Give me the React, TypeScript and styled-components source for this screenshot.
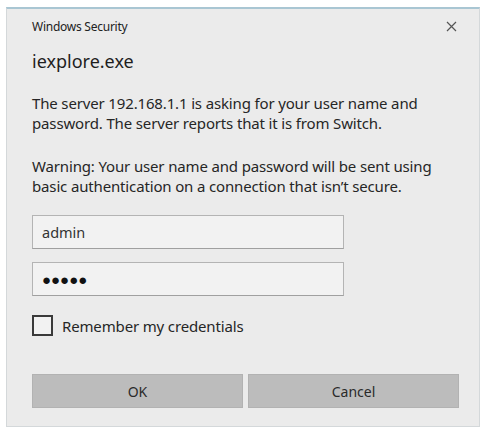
import React from "react";
import styled, { createGlobalStyle } from "styled-components";

const Global = createGlobalStyle`
  html, body { margin: 0; padding: 0; background: #ffffff; }
  body { font-family: "Noto Sans", "Open Sans", sans-serif; color: #262626; }
`;

const Dialog = styled.div`
  box-sizing: border-box;
  margin: 7px 0 0 6px;
  width: 474px;
  height: 420px;
  background: #ebebeb;
  border: 1px solid #d4d8da;
  border-top: 2px solid #a9c6d3;
  padding: 0 20px 0 25px;
  display: flex;
  flex-direction: column;
`;

const TitleBar = styled.div`
  height: 35px;
  display: flex;
  align-items: center;
  justify-content: space-between;
`;

const TitleText = styled.span`
  font-size: 12px;
  letter-spacing: -0.25px;
  color: #222;
`;

const Close = styled.svg`
  width: 11px;
  height: 11px;
  margin-right: 2px;
`;

const Heading = styled.div`
  margin-top: 3px;
  font-size: 18px;
  line-height: 28px;
  color: #1e1e1e;
`;

const Para = styled.p<{ $top: number }>`
  margin: ${(p) => p.$top}px 0 0;
  font-size: 15px;
  line-height: 20px;
  letter-spacing: -0.15px;
  color: #262626;
`;

const Input = styled.div<{ $top: number }>`
  box-sizing: border-box;
  margin-top: ${(p) => p.$top}px;
  width: 312px;
  height: 34px;
  background: #f2f2f2;
  border: 1px solid #b4b4b4;
  border-bottom-color: #a0a0a0;
  display: flex;
  align-items: center;
  padding-left: 9px;
  font-size: 14.5px;
  color: #333;
`;

const Dots = styled.span`
  font-size: 15px;
  color: #111;
`;

const CheckRow = styled.label`
  margin-top: 19px;
  display: flex;
  align-items: center;
  gap: 9px;
  font-size: 15px;
  color: #262626;
  letter-spacing: -0.15px;
`;

const Box = styled.span`
  box-sizing: border-box;
  width: 21px;
  height: 21px;
  border: 2px solid #3a3a3a;
  background: #f2f2f2;
`;

const Buttons = styled.div`
  margin-top: 38px;
  display: flex;
  gap: 5px;
`;

const Button = styled.div`
  box-sizing: border-box;
  width: 211px;
  height: 34px;
  background: #bcbcbc;
  border: 1px solid #b2b2b2;
  display: flex;
  align-items: center;
  justify-content: center;
  font-size: 14px;
  color: #2a2a2a;
`;

export default function App() {
  return (
    <>
      <Global />
      <Dialog>
        <TitleBar>
          <TitleText>Windows Security</TitleText>
          <Close viewBox="0 0 11 11">
            <path d="M1 1 L10 10 M10 1 L1 10" stroke="#555" strokeWidth="1.2" fill="none" />
          </Close>
        </TitleBar>
        <Heading>iexplore.exe</Heading>
        <Para $top={18}>
          The server 192.168.1.1 is asking for your user name and
          <br />
          password. The server reports that it is from Switch.
        </Para>
        <Para $top={23}>
          Warning: Your user name and password will be sent using
          <br />
          basic authentication on a connection that isn’t secure.
        </Para>
        <Input $top={19}>admin</Input>
        <Input $top={13}>
          <Dots>●●●●●</Dots>
        </Input>
        <CheckRow>
          <Box />
          Remember my credentials
        </CheckRow>
        <Buttons>
          <Button>OK</Button>
          <Button>Cancel</Button>
        </Buttons>
      </Dialog>
    </>
  );
}
